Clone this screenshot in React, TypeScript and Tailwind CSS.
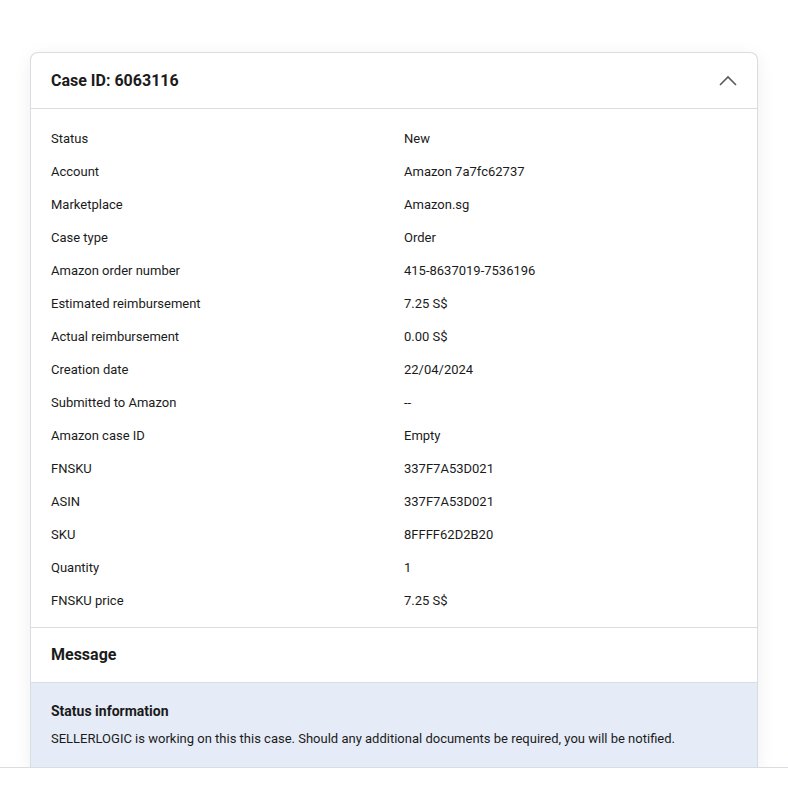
import { useState } from "react";

type Row = { label: string; value: string };

const rows: Row[] = [
  { label: "Status", value: "New" },
  { label: "Account", value: "Amazon 7a7fc62737" },
  { label: "Marketplace", value: "Amazon.sg" },
  { label: "Case type", value: "Order" },
  { label: "Amazon order number", value: "415-8637019-7536196" },
  { label: "Estimated reimbursement", value: "7.25 S$" },
  { label: "Actual reimbursement", value: "0.00 S$" },
  { label: "Creation date", value: "22/04/2024" },
  { label: "Submitted to Amazon", value: "--" },
  { label: "Amazon case ID", value: "Empty" },
  { label: "FNSKU", value: "337F7A53D021" },
  { label: "ASIN", value: "337F7A53D021" },
  { label: "SKU", value: "8FFFF62D2B20" },
  { label: "Quantity", value: "1" },
  { label: "FNSKU price", value: "7.25 S$" },
];

function App() {
  const [open, setOpen] = useState(true);

  return (
    <div className="flex h-[800px] flex-col overflow-hidden bg-white font-['Roboto',sans-serif] text-[#1b1b1b]">
      <main className="flex-1 overflow-hidden px-[30px] pt-[52px]">
        <section className="rounded-t-lg border border-b-0 border-[#d8dde2] bg-white shadow-[0_4px_18px_rgba(0,0,0,0.07)]">
          <header className="flex h-[56px] items-center justify-between border-b border-[#d8dde2] px-5">
            <h1 className="text-base font-bold">Case ID: 6063116</h1>
            <button
              type="button"
              onClick={() => setOpen(!open)}
              className="flex items-center text-[#5a5a5a]"
            >
              <svg width="18" height="11" viewBox="0 0 18 11" fill="none">
                <path d="M1 10 L9 2 L17 10" stroke="currentColor" strokeWidth="1.6" />
              </svg>
            </button>
          </header>

          {open ? (
            <dl className="grid grid-cols-2 gap-x-5 border-b border-[#d8dde2] px-5 pt-[13px] pb-[10px] text-[13px]">
              {rows.map((row) => (
                <div key={row.label} className="col-span-2 grid h-[33px] grid-cols-2 items-center gap-x-5">
                  <dt>{row.label}</dt>
                  <dd>{row.value}</dd>
                </div>
              ))}
            </dl>
          ) : null}

          <div className="flex h-[55px] items-center border-b border-[#d8dde2] px-5">
            <h2 className="text-base font-bold">Message</h2>
          </div>

          <div className="h-[85px] bg-[#e6ecf7] px-5 pt-[18px]">
            <h3 className="text-sm font-bold">Status information</h3>
            <p className="mt-[8px] text-[13px]">
              SELLERLOGIC is working on this this case. Should any additional documents be required, you will be notified.
            </p>
          </div>
        </section>
      </main>
      <footer className="h-[33px] shrink-0 border-t border-[#d8dde2] bg-white" />
    </div>
  );
}

export default App;
